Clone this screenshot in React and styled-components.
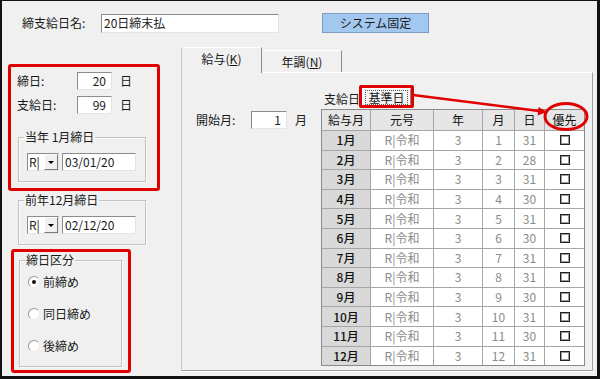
import React from 'react';
import styled, { createGlobalStyle } from 'styled-components';

const GlobalStyle = createGlobalStyle`
  html, body { margin: 0; padding: 0; background: #f0f0f0; }
  body {
    font-family: "Noto Sans CJK JP", "Noto Sans", sans-serif;
    font-size: 12px;
    color: #1a1a1a;
  }
  * { box-sizing: border-box; }
`;

const RED = '#e00000';

const Frame = styled.div`
  width: 600px;
  height: 379px;
  border-style: solid;
  border-color: #111;
  border-width: 1px 3px 3px 2px;
  background: #f0f0f0;
  display: flex;
  flex-direction: column;
  overflow: hidden;
`;

const TopRow = styled.div`
  display: flex;
  align-items: center;
  height: 20px;
  margin-top: 12px;
  padding-left: 20px;
`;

const Label = styled.span`
  width: ${(p) => p.$w}px;
  flex: none;
  line-height: 14px;
  white-space: nowrap;
`;

const Unit = styled.span`
  margin-left: ${(p) => p.$ml ?? 8}px;
  line-height: 14px;
`;

const TextBox = styled.div`
  width: ${(p) => p.$w}px;
  height: ${(p) => p.$h || 18}px;
  margin-left: ${(p) => p.$ml || 0}px;
  flex: none;
  background: #fff;
  border: 1px solid;
  border-color: #8c8c8c #e4e4e4 #e4e4e4 #8c8c8c;
  display: flex;
  align-items: center;
  justify-content: ${(p) => (p.$right ? 'flex-end' : 'flex-start')};
  padding: 0 ${(p) => (p.$right ? 5 : 2)}px;
  line-height: 14px;
  white-space: nowrap;
  overflow: hidden;
`;

const SysButton = styled.div`
  margin-left: 43px;
  width: 107px;
  height: 20px;
  background: #a3c8f0;
  border: 1px solid #7c9cc2;
  display: flex;
  align-items: center;
  justify-content: center;
  line-height: 14px;
`;

const Main = styled.div`
  display: flex;
  align-items: flex-start;
  margin-top: 14px;
`;

const LeftCol = styled.div`
  width: 179px;
  flex: none;
  padding-left: 6px;
  display: flex;
  flex-direction: column;
  align-items: flex-start;
`;

const RedBox = styled.div`
  border: 3px solid ${RED};
  border-radius: 3px;
  width: ${(p) => p.$w}px;
  margin: ${(p) => p.$m};
  padding: ${(p) => p.$p};
  display: flex;
  flex-direction: column;
  align-items: flex-start;
`;

const FieldRow = styled.div`
  display: flex;
  align-items: center;
  height: 18px;
  margin-top: ${(p) => p.$mt || 0}px;
`;

const Group = styled.fieldset`
  margin: ${(p) => p.$mt || 0}px 0 0 ${(p) => p.$ml || 0}px;
  width: ${(p) => p.$w}px;
  padding: 0;
  min-width: 0;
  border: 1px solid #c2c2c2;
  box-shadow: 1px 1px 0 #fbfbfb, inset 1px 1px 0 #fbfbfb;
`;

const Legend = styled.legend`
  margin-left: 5px;
  padding: 0 1px;
  font-size: 12px;
  line-height: 14px;
`;

const GroupBody = styled.div`
  padding: ${(p) => p.$p};
  display: flex;
  flex-direction: ${(p) => (p.$col ? 'column' : 'row')};
  align-items: ${(p) => (p.$col ? 'flex-start' : 'center')};
  gap: ${(p) => p.$gap || 0}px;
`;

const Combo = styled.div`
  display: flex;
  width: 32px;
  height: 18px;
  flex: none;
  background: #fff;
  border: 1px solid;
  border-color: #8c8c8c #e4e4e4 #e4e4e4 #8c8c8c;
`;

const ComboText = styled.span`
  flex: 1;
  white-space: nowrap;
  padding-left: 1px;
  line-height: 15px;
`;

const ComboBtn = styled.span`
  width: 14px;
  flex: none;
  background: #f0f0f0;
  border: 1px solid;
  border-color: #fff #7a7a7a #7a7a7a #fff;
  display: flex;
  align-items: center;
  justify-content: center;
  &::after {
    content: '';
    border-left: 3px solid transparent;
    border-right: 3px solid transparent;
    border-top: 3px solid #000;
  }
`;

const RadioRow = styled.div`
  display: flex;
  align-items: center;
  height: 16px;
`;

const RadioDot = styled.span`
  width: 12px;
  height: 12px;
  border-radius: 50%;
  background: #fff;
  border: 1px solid;
  border-color: #9a9a9a #ececec #ececec #9a9a9a;
  display: flex;
  align-items: center;
  justify-content: center;
  &::after {
    content: '';
    width: 4px;
    height: 4px;
    border-radius: 50%;
    background: ${(p) => (p.$on ? '#111' : 'transparent')};
  }
`;

const RadioText = styled.span`
  margin-left: 3px;
  line-height: 14px;
`;

const TabControl = styled.div`
  width: 412px;
  height: 324px;
  display: flex;
  flex-direction: column;
`;

const TabStrip = styled.div`
  display: flex;
  align-items: flex-end;
  height: 25px;
  flex: none;
`;

const Tab = styled.div`
  width: ${(p) => p.$w}px;
  height: ${(p) => (p.$active ? 26 : 22)}px;
  margin-bottom: ${(p) => (p.$active ? -1 : 0)}px;
  position: relative;
  z-index: ${(p) => (p.$active ? 1 : 0)};
  background: #f0f0f0;
  border-top: 1px solid #fff;
  border-left: 1px solid ${(p) => (p.$noLeft ? 'transparent' : '#c8c8c8')};
  border-right: 1px solid #8c8c8c;
  display: flex;
  align-items: center;
  justify-content: center;
  padding-bottom: ${(p) => (p.$active ? 4 : 0)}px;
  line-height: 14px;
  u { text-underline-offset: 1px; }
`;

const Panel = styled.div`
  flex: 1;
  border-top: 1px solid #fff;
  border-left: 1px solid #c8c8c8;
  border-right: 1px solid #a0a0a0;
  border-bottom: 1px solid #a0a0a0;
  box-shadow: 0 1px 0 #fff;
  display: flex;
  align-items: flex-start;
  padding: 12px 0 0 14px;
`;

const StartMonth = styled.div`
  width: 125px;
  flex: none;
  margin-top: 26px;
  display: flex;
  align-items: center;
  height: 18px;
`;

const TableBlock = styled.div`
  position: relative;
  display: flex;
  flex-direction: column;
`;

const SubTabs = styled.div`
  display: flex;
  align-items: flex-start;
  height: 24px;
`;

const SubTab = styled.div`
  width: 38px;
  padding: 7px 0 0 3px;
  line-height: 14px;
  white-space: nowrap;
`;

const SubTabMark = styled.div`
  width: 55px;
  height: 23px;
  border: 3px solid ${RED};
  border-radius: 2px;
  display: flex;
`;

const SubTabActive = styled.div`
  flex: 1;
  background: #f4f4f4;
  border-top: 1px solid #fff;
  border-left: 1px solid #fff;
  border-right: 1px solid #8c8c8c;
  padding: 1px 2px 0 2px;
  display: flex;
`;

const FocusRect = styled.div`
  flex: 1;
  border: 1px dotted #555;
  display: flex;
  align-items: center;
  justify-content: center;
  line-height: 14px;
`;

const Grid = styled.div`
  display: grid;
  grid-template-columns: 48px 62px 48px 31px 29px 39px;
  grid-template-rows: 20px repeat(12, 18.6px);
  gap: 1px;
  background: #a6a6a6;
  border: 1px solid #8a8a8a;
  width: 264px;
`;

const Cell = styled.div`
  display: flex;
  align-items: center;
  justify-content: center;
  line-height: 14px;
  background: ${(p) => (p.$kind === 'head' ? '#e6e6e6' : p.$kind === 'month' ? '#d9d9d9' : '#fff')};
  color: ${(p) => (p.$kind === 'data' ? '#8a8a8a' : '#111')};
  font-weight: ${(p) => (p.$kind === 'month' ? 500 : 400)};
`;

const CheckBox = styled.span`
  width: 10px;
  height: 10px;
  border: 1px solid #222;
  box-shadow: inset 0 0 0 1px #9c9c9c;
  background: #fff;
`;

const Overlay = styled.svg`
  position: absolute;
  left: 0;
  top: 0;
  width: 270px;
  height: 50px;
  overflow: visible;
  pointer-events: none;
`;

const DAYS = [31, 28, 31, 30, 31, 30, 31, 31, 30, 31, 30, 31];
const HEAD = ['給与月', '元号', '年', '月', '日', '優先'];

export default function App() {
  return (
    <>
      <GlobalStyle />
      <Frame>
        <TopRow>
          <Label $w={79}>締支給日名:</Label>
          <TextBox $w={178} $h={19}>20日締末払</TextBox>
          <SysButton>システム固定</SysButton>
        </TopRow>

        <Main>
          <LeftCol>
            <RedBox $w={152} $m="17px 0 0 0" $p="5px 0 6px 6px">
              <FieldRow>
                <Label $w={60}>締日:</Label>
                <TextBox $w={35} $right>20</TextBox>
                <Unit>日</Unit>
              </FieldRow>
              <FieldRow $mt={6}>
                <Label $w={60}>支給日:</Label>
                <TextBox $w={35} $right>99</TextBox>
                <Unit>日</Unit>
              </FieldRow>
              <Group $w={128} $mt={16} $ml={1}>
                <Legend>当年 1月締日</Legend>
                <GroupBody $p="9px 0 10px 8px" $gap={3}>
                  <Combo>
                    <ComboText>R|</ComboText>
                    <ComboBtn />
                  </Combo>
                  <TextBox $w={74}>03/01/20</TextBox>
                </GroupBody>
              </Group>
            </RedBox>

            <Group $w={128} $mt={2} $ml={10}>
              <Legend>前年12月締日</Legend>
              <GroupBody $p="9px 0 10px 8px" $gap={3}>
                <Combo>
                  <ComboText>R|</ComboText>
                  <ComboBtn />
                </Combo>
                <TextBox $w={74}>02/12/20</TextBox>
              </GroupBody>
            </Group>

            <RedBox $w={120} $m="4px 0 0 3px" $p="1px 0 3px 5px">
              <Group $w={103}>
                <Legend>締日区分</Legend>
                <GroupBody $col $p="7px 0 12px 8px" $gap={16}>
                  <RadioRow>
                    <RadioDot $on />
                    <RadioText>前締め</RadioText>
                  </RadioRow>
                  <RadioRow>
                    <RadioDot />
                    <RadioText>同日締め</RadioText>
                  </RadioRow>
                  <RadioRow>
                    <RadioDot />
                    <RadioText>後締め</RadioText>
                  </RadioRow>
                </GroupBody>
              </Group>
            </RedBox>
          </LeftCol>

          <TabControl>
            <TabStrip>
              <Tab $w={81} $active>
                給与(<u>K</u>)
              </Tab>
              <Tab $w={80} $noLeft>
                年調(<u>N</u>)
              </Tab>
            </TabStrip>
            <Panel>
              <StartMonth>
                <Label $w={55}>開始月:</Label>
                <TextBox $w={36} $right>1</TextBox>
                <Unit>月</Unit>
              </StartMonth>

              <TableBlock>
                <SubTabs>
                  <SubTab>支給日</SubTab>
                  <SubTabMark>
                    <SubTabActive>
                      <FocusRect>基準日</FocusRect>
                    </SubTabActive>
                  </SubTabMark>
                </SubTabs>
                <Grid>
                  {HEAD.map((h) => (
                    <Cell key={h} $kind="head">{h}</Cell>
                  ))}
                  {DAYS.map((d, i) => (
                    <React.Fragment key={i}>
                      <Cell $kind="month">{i + 1}月</Cell>
                      <Cell $kind="data">R|令和</Cell>
                      <Cell $kind="data">3</Cell>
                      <Cell $kind="data">{i + 1}</Cell>
                      <Cell $kind="data">{d}</Cell>
                      <Cell $kind="data">
                        <CheckBox />
                      </Cell>
                    </React.Fragment>
                  ))}
                </Grid>
                <Overlay viewBox="0 0 270 50">
                  <line x1="92" y1="10" x2="218" y2="26" stroke={RED} strokeWidth="2.5" />
                  <polygon points="226,27 217.5,22 216.6,30.5" fill={RED} />
                  <ellipse cx="245" cy="31.5" rx="21" ry="13" fill="none" stroke={RED} strokeWidth="3" />
                </Overlay>
              </TableBlock>
            </Panel>
          </TabControl>
        </Main>
      </Frame>
    </>
  );
}
